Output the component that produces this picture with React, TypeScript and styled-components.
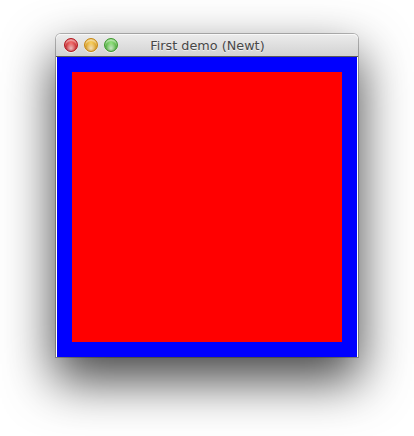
import React from "react";
import styled, { createGlobalStyle } from "styled-components";

const Global = createGlobalStyle`
  html, body { margin: 0; padding: 0; background: #ffffff; }
  #root { width: 414px; height: 436px; }
`;

const Page = styled.div`
  width: 414px;
  height: 436px;
  padding: 34px 0 0 56px;
  box-sizing: border-box;
  background: #ffffff;
`;

const Window = styled.div`
  width: 302px;
  display: flex;
  flex-direction: column;
  border-radius: 5px 5px 0 0;
  box-shadow: 0 22px 50px 2px rgba(0, 0, 0, 0.72), 0 0 0 1px rgba(0, 0, 0, 0.25);
`;

const TitleBar = styled.div`
  height: 22px;
  position: relative;
  display: flex;
  align-items: center;
  justify-content: center;
  border-radius: 5px 5px 0 0;
  background: linear-gradient(#ececec, #d2d2d2);
  border-bottom: 1px solid #5a5a5a;
  box-shadow: inset 0 1px 0 #f8f8f8;
`;

const Lights = styled.div`
  position: absolute;
  left: 8px;
  top: 4px;
  display: flex;
  gap: 6px;
`;

const Light = styled.div<{ $c: string; $d: string }>`
  width: 14px;
  height: 14px;
  border-radius: 50%;
  box-sizing: border-box;
  border: 1px solid ${(p) => p.$d};
  background: radial-gradient(circle at 50% 78%, #ffffffaa 0, transparent 50%),
    radial-gradient(circle at 50% 30%, ${(p) => p.$c} 0, ${(p) => p.$d} 90%);
  box-shadow: inset 0 2px 1px rgba(255, 255, 255, 0.45), 0 1px 0 rgba(255, 255, 255, 0.5);
`;

const Title = styled.span`
  font-family: "DejaVu Sans", "Liberation Sans", sans-serif;
  font-size: 12.8px;
  color: #474747;
  text-shadow: 0 1px 0 rgba(255, 255, 255, 0.6);
  margin-left: 1px;
`;

const Content = styled.div`
  width: 300px;
  height: 300px;
  box-sizing: border-box;
  margin: 0 1px;
  padding: 15px;
  background: #0000ff;
`;

const Inner = styled.div`
  width: 100%;
  height: 100%;
  background: #ff0000;
`;

export default function App() {
  return (
    <>
      <Global />
      <Page>
        <Window>
          <TitleBar>
            <Lights>
              <Light $c="#f26a6a" $d="#b3141c" />
              <Light $c="#f7cf5c" $d="#c8870f" />
              <Light $c="#8ee07a" $d="#3d9a2c" />
            </Lights>
            <Title>First demo (Newt)</Title>
          </TitleBar>
          <Content>
            <Inner />
          </Content>
        </Window>
      </Page>
    </>
  );
}
